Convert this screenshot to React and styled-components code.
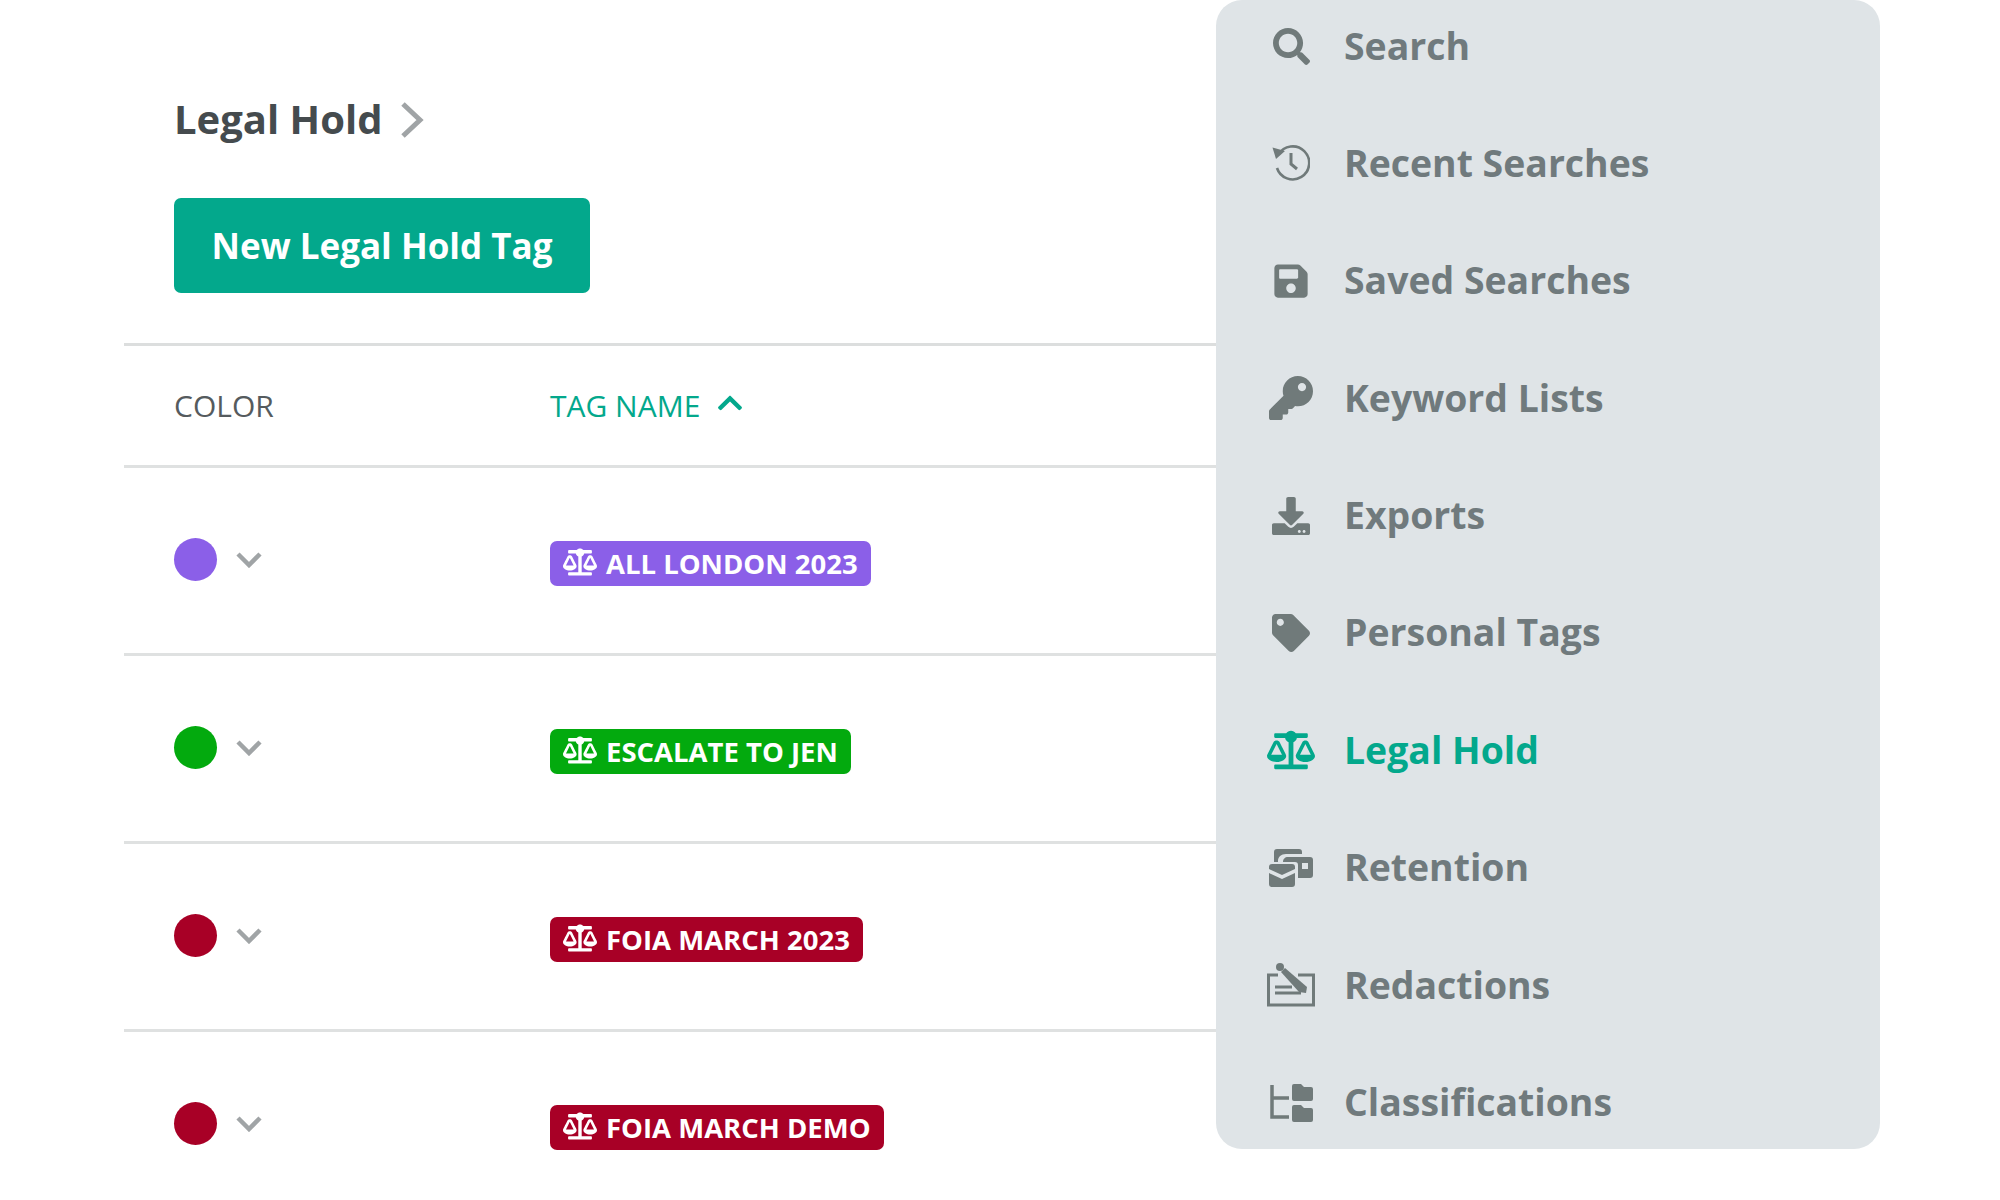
import React from 'react';
import styled, { createGlobalStyle } from 'styled-components';
import {
  FaSearch,
  FaSave,
  FaKey,
  FaDownload,
  FaTag,
  FaBalanceScale,
  FaChevronUp,
} from 'react-icons/fa';

const GlobalStyle = createGlobalStyle`
  html, body {
    margin: 0;
    padding: 0;
    background: #fff;
    font-family: "Open Sans", "Liberation Sans", sans-serif;
  }
`;

const Page = styled.div`
  display: flex;
  width: 2000px;
  height: 1200px;
  overflow: hidden;
  padding-left: 124px;
  box-sizing: border-box;
`;

const Main = styled.div`
  width: 1092px;
  flex: none;
`;

const Intro = styled.div`
  height: 343px;
  box-sizing: border-box;
  padding: 92px 0 0 50px;
`;

const Crumb = styled.div`
  display: flex;
  align-items: center;
  gap: 18px;
  height: 52px;
  font-size: 40px;
  font-weight: 700;
  color: #454b4e;
  white-space: nowrap;
`;

const CrumbArrow = styled.svg`
  flex: none;
  width: 24px;
  height: 38px;
  margin-top: 4px;
  fill: none;
  stroke: #a0a4a6;
  stroke-width: 5;
`;

const PrimaryButton = styled.button`
  display: block;
  width: 416px;
  height: 95px;
  margin-top: 54px;
  padding: 0;
  border: 0;
  border-radius: 7px;
  background: #03a88c;
  color: #fff;
  font-family: inherit;
  font-size: 35px;
  font-weight: 700;
`;

const Table = styled.div`
  border-top: 3px solid #dcdede;
`;

const HeadRow = styled.div`
  display: flex;
  align-items: center;
  height: 119px;
  padding-left: 50px;
  font-size: 30px;
  color: #555b5e;
`;

const ColorCol = styled.div`
  display: flex;
  align-items: center;
  flex: none;
  width: 376px;
  gap: 19px;
`;

const SortHead = styled.div`
  display: flex;
  align-items: center;
  gap: 16px;
  color: #03a88c;

  svg {
    font-size: 28px;
    margin-top: -6px;
  }
`;

const Row = styled.div`
  display: flex;
  height: 115px;
  padding: 70px 0 0 50px;
  border-top: 3px solid #dfe1e1;
  align-items: flex-start;
`;

const Dot = styled.span`
  width: 43px;
  height: 43px;
  border-radius: 50%;
  background: ${(props) => props.color};
`;

const DownArrow = styled.svg`
  flex: none;
  width: 26px;
  height: 16px;
  fill: none;
  stroke: #a0a4a6;
  stroke-width: 4.500;
`;

const Badge = styled.span`
  display: inline-flex;
  align-items: center;
  gap: 9px;
  height: 45px;
  margin-top: 3px;
  padding: 0 13px;
  border-radius: 7px;
  background: ${(props) => props.color};
  color: #fff;
  font-size: 27.5px;
  font-weight: 700;
  line-height: 44px;
  white-space: nowrap;

  svg {
    font-size: 34px;
    margin-top: -4px;
  }
`;

const Panel = styled.nav`
  flex: none;
  width: 664px;
  height: 1149px;
  box-sizing: border-box;
  display: flex;
  flex-direction: column;
  gap: 25.4px;
  background: #dfe4e7;
  border-radius: 26px;
`;

const MenuItem = styled.div`
  display: flex;
  align-items: center;
  flex: none;
  height: 92px;
  color: ${(props) => (props.$active ? '#03a88c' : '#707a7d')};
  font-size: 37.4px;
  font-weight: 700;
`;

const MenuLabel = styled.span`
  margin-top: -2px;
`;

const MenuIcon = styled.span`
  display: flex;
  align-items: center;
  justify-content: center;
  flex: none;
  width: 50px;
  margin: 0 28px 0 50px;

  svg {
    display: block;
    width: ${(props) => props.size || 38}px;
    height: ${(props) => props.size || 38}px;
    color: ${(props) => (props.$active ? '#03a88c' : '#707a7a')};
  }
`;

const HistoryIcon = () => (
  <svg viewBox="0 0 38 38" fill="none" stroke="currentColor" strokeWidth="2.6">
    <path d="M6.5 10.5A16.5 16.5 0 1 1 5 24" />
    <path d="M0.5 3.500 L13 7 L4 15 Z" fill="currentColor" stroke="none" />
    <path d="M19 9 V20 L25 25" strokeWidth="3" />
  </svg>
);

const RetentionIcon = () => (
  <svg viewBox="0 0 44 38" fill="currentColor">
    <path d="M8 0h22a3 3 0 0 1 3 3v2H17c-5 0-8 3-8 7v1H5V3a3 3 0 0 1 3-3z" />
    <path d="M14 13c0-3 2-5 5-5h22a3 3 0 0 1 3 3v15a3 3 0 0 1-3 3H29V16a3 3 0 0 0-3-3z" />
    <rect x="33" y="14" width="6" height="6" fill="#dfe4e7" />
    <path d="M0 18a3 3 0 0 1 3-3h20a3 3 0 0 1 3 3v2l-13 6L0 20z" />
    <path d="M0 24l13 6 13-6v11a3 3 0 0 1-3 3H3a3 3 0 0 1-3-3z" />
  </svg>
);

const RedactionIcon = () => (
  <svg viewBox="0 0 48 44" fill="none" stroke="currentColor">
    <path d="M11 12H1.500v30h45V12H31" strokeWidth="3" />
    <path d="M8 24h17M8 30h26" strokeWidth="3" />
    <path d="M14 9l4-4 22 19-1 6-7-1z" fill="currentColor" stroke="none" />
    <circle cx="13" cy="4" r="4" fill="currentColor" stroke="none" />
  </svg>
);

const TreeIcon = () => (
  <svg viewBox="0 0 44 38" fill="currentColor">
    <path d="M3 1V33H20M3 14H20" fill="none" stroke="currentColor" strokeWidth="3.500" />
    <path d="M23 2a2 2 0 0 1 2-2h7l3 3h7a2 2 0 0 1 2 2v10a2 2 0 0 1-2 2H25a2 2 0 0 1-2-2z" />
    <path d="M23 23a2 2 0 0 1 2-2h7l3 3h7a2 2 0 0 1 2 2v10a2 2 0 0 1-2 2H25a2 2 0 0 1-2-2z" />
  </svg>
);

const rows = [
  { dot: '#8b5fe8', label: 'ALL LONDON 2023' },
  { dot: '#03aa0e', label: 'ESCALATE TO JEN' },
  { dot: '#a80026', label: 'FOIA MARCH 2023' },
  { dot: '#a80026', label: 'FOIA MARCH DEMO' },
];

const menu = [
  { label: 'Search', icon: <FaSearch />, size: 37 },
  { label: 'Recent Searches', icon: <HistoryIcon />, size: 38 },
  { label: 'Saved Searches', icon: <FaSave />, size: 38 },
  { label: 'Keyword Lists', icon: <FaKey />, size: 44 },
  { label: 'Exports', icon: <FaDownload />, size: 38 },
  { label: 'Personal Tags', icon: <FaTag />, size: 38 },
  { label: 'Legal Hold', icon: <FaBalanceScale />, size: 48, active: true },
  { label: 'Retention', icon: <RetentionIcon />, size: 44 },
  { label: 'Redactions', icon: <RedactionIcon />, size: 48 },
  { label: 'Classifications', icon: <TreeIcon />, size: 44 },
];

const App = () => (
  <Page>
    <GlobalStyle />
    <Main>
      <Intro>
        <Crumb>
          Legal Hold
          <CrumbArrow viewBox="0 0 24 38">
            <path d="M3 3 L20 19 L3 35" />
          </CrumbArrow>
        </Crumb>
        <PrimaryButton>New Legal Hold Tag</PrimaryButton>
      </Intro>
      <Table>
        <HeadRow>
          <ColorCol>COLOR</ColorCol>
          <SortHead>
            TAG NAME
            <FaChevronUp />
          </SortHead>
        </HeadRow>
        {rows.map((row) => (
          <Row key={row.label}>
            <ColorCol>
              <Dot color={row.dot} />
              <DownArrow viewBox="0 0 26 16">
                <path d="M2 2 L13 13 L24 2" />
              </DownArrow>
            </ColorCol>
            <Badge color={row.dot}>
              <FaBalanceScale />
              {row.label}
            </Badge>
          </Row>
        ))}
      </Table>
    </Main>
    <Panel>
      {menu.map((item) => (
        <MenuItem key={item.label} $active={item.active}>
          <MenuIcon size={item.size} $active={item.active}>
            {item.icon}
          </MenuIcon>
          <MenuLabel>{item.label}</MenuLabel>
        </MenuItem>
      ))}
    </Panel>
  </Page>
);

export default App;
